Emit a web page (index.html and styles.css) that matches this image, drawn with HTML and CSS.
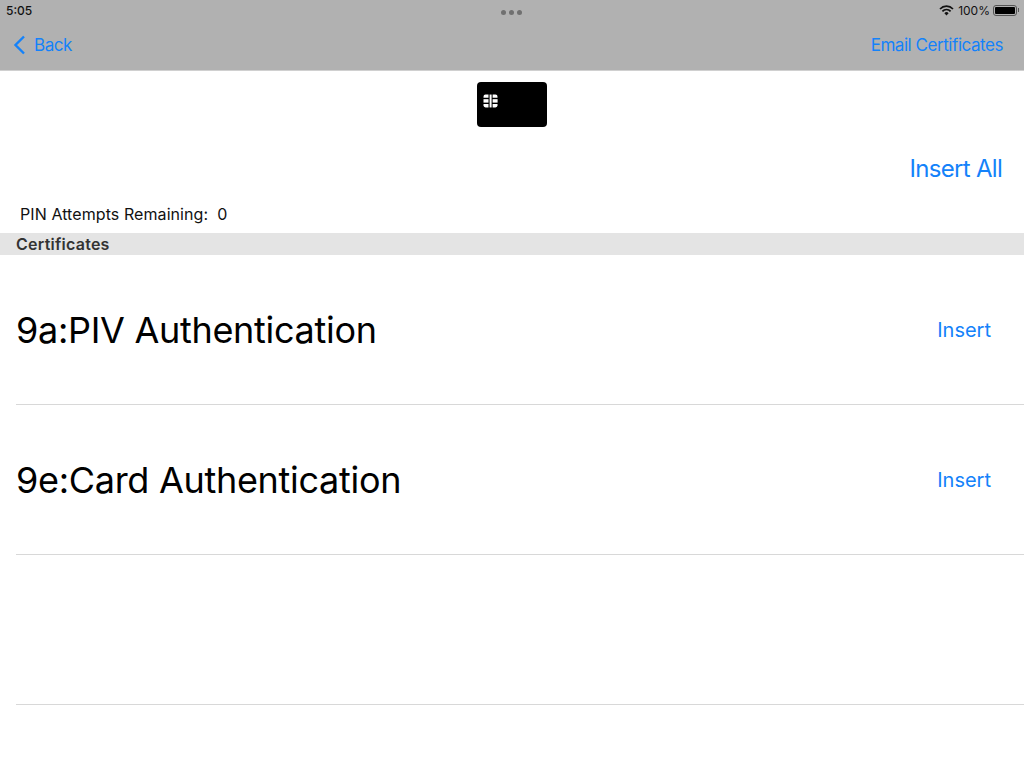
FILE: index.html
```html
<!DOCTYPE html>
<html lang="en">
<head>
  <meta charset="UTF-8">
  <title>Certificates</title>
  <link rel="stylesheet" href="styles.css">
</head>
<body>
  <header class="top-bar">
    <div class="status-row">
      <span class="time">5:05</span>
      <div class="dots"><i></i><i></i><i></i></div>
      <div class="status-right">
        <svg class="wifi" width="15" height="11" viewBox="0 0 15 11">
          <path d="M1 4 A9 9 0 0 1 14 4" fill="none" stroke="#111" stroke-width="1.7"/>
          <path d="M3.4 6.3 A5.6 5.6 0 0 1 11.6 6.3" fill="none" stroke="#111" stroke-width="1.7"/>
          <path d="M5.4 8.3 A2.8 2.8 0 0 1 9.6 8.3 L7.5 10.6 Z" fill="#111"/>
        </svg>
        <span class="battery-text">100%</span>
        <div class="battery"><div class="battery-fill"></div></div>
        <div class="battery-cap"></div>
      </div>
    </div>
    <nav class="nav-row">
      <a class="back">
        <svg width="13" height="20" viewBox="0 0 13 20">
          <path d="M11 1.5 L2.5 10 L11 18.5" fill="none" stroke="#1482fa" stroke-width="2.4"/>
        </svg>
        <span>Back</span>
      </a>
      <a class="email">Email Certificates</a>
    </nav>
  </header>

  <main>
    <div class="card-row">
      <div class="card">
        <svg class="chip" width="15" height="14" viewBox="0 0 15 13" preserveAspectRatio="none">
          <path d="M0.5 2.5 Q0.5 0.5 2.5 0.5 L5.5 0.5 L5.5 3.4 L0.5 3.4 Z" fill="#fff"/>
          <rect x="0.5" y="4.8" width="5" height="3.2" fill="#fff"/>
          <path d="M0.5 9.4 L5.5 9.4 L5.5 12.5 L2.5 12.5 Q0.5 12.5 0.5 10.5 Z" fill="#fff"/>
          <rect x="6.6" y="0.5" width="2" height="12" fill="#fff"/>
          <path d="M9.6 0.5 L12.5 0.5 Q14.5 0.5 14.5 2.5 L14.5 3.4 L9.6 3.4 Z" fill="#fff"/>
          <rect x="9.6" y="4.8" width="5" height="3.2" fill="#fff"/>
          <path d="M9.6 9.4 L14.5 9.4 L14.5 10.5 Q14.5 12.5 12.5 12.5 L9.6 12.5 Z" fill="#fff"/>
        </svg>
      </div>
    </div>

    <div class="insert-all-row"><a class="insert-all">Insert All</a></div>

    <div class="pin-row">PIN Attempts Remaining:&nbsp; 0</div>

    <div class="section-head">Certificates</div>

    <ul class="cert-list">
      <li class="cert-row">
        <span class="cert-name">9a:PIV Authentication</span>
        <a class="insert">Insert</a>
      </li>
      <li class="cert-row">
        <span class="cert-name">9e:Card Authentication</span>
        <a class="insert">Insert</a>
      </li>
      <li class="cert-row"></li>
    </ul>
  </main>
</body>
</html>
```

FILE: styles.css
```css
body {
  margin: 0;
  background: #fff;
  font-family: Inter, "Liberation Sans", Arial, sans-serif;
  color: #000;
  overflow: hidden;
}

.top-bar {
  height: 70px;
  background: #b1b1b1;
  border-bottom: 1px solid #d0d0d0;
}

.status-row {
  height: 20px;
  padding: 0 5px 0 6px;
  display: flex;
  justify-content: space-between;
  align-items: center;
  font-size: 12px;
  color: #111;
}

.time {
  font-weight: 500;
}

.dots {
  display: flex;
  gap: 3px;
  margin-left: 52px;
  margin-top: 4px;
}

.dots i {
  width: 5px;
  height: 5px;
  border-radius: 50%;
  background: #707070;
}

.status-right {
  display: flex;
  align-items: center;
}

.battery-text {
  margin-left: 4px;
}

.battery {
  width: 24px;
  height: 11px;
  margin-left: 3px;
  box-sizing: border-box;
  border: 1px solid #555;
  border-radius: 3px;
  padding: 1px;
}

.battery-fill {
  height: 100%;
  background: #000;
  border-radius: 1px;
}

.battery-cap {
  width: 1px;
  height: 4px;
  margin-left: 1px;
  background: #555;
}

.nav-row {
  height: 50px;
  padding: 0 21px 0 13px;
  display: flex;
  justify-content: space-between;
  align-items: center;
  font-size: 17px;
  letter-spacing: -0.45px;
  color: #1482fa;
}

.back {
  display: flex;
  align-items: center;
  gap: 8px;
}

.card-row {
  display: flex;
  justify-content: center;
  padding-top: 11px;
}

.card {
  width: 70px;
  height: 45px;
  box-sizing: border-box;
  background: #000;
  border-radius: 4px;
  padding: 12px 0 0 6px;
}

.chip {
  display: block;
}

.insert-all-row {
  display: flex;
  justify-content: flex-end;
  padding: 27px 22px 0 0;
}

.insert-all {
  font-size: 24px;
  line-height: 30px;
  letter-spacing: -0.7px;
  color: #1482fa;
}

.pin-row {
  padding: 20px 0 0 20px;
  font-size: 16px;
  line-height: 20px;
  letter-spacing: 0.08px;
  color: #111;
}

.section-head {
  margin-top: 9px;
  height: 22px;
  padding-left: 16px;
  background: #e4e4e4;
  font-size: 16px;
  font-weight: 600;
  line-height: 22px;
  letter-spacing: 0.25px;
  color: #333;
}

.cert-list {
  list-style: none;
  margin: 0;
  padding: 0 0 0 16px;
}

.cert-row {
  height: 150px;
  box-sizing: border-box;
  border-bottom: 1px solid #d8d8d8;
  padding-right: 33px;
  display: flex;
  justify-content: space-between;
  align-items: center;
}

.cert-name {
  font-size: 36px;
  letter-spacing: -0.3px;
}

.insert {
  font-size: 20px;
  color: #1482fa;
}
```
